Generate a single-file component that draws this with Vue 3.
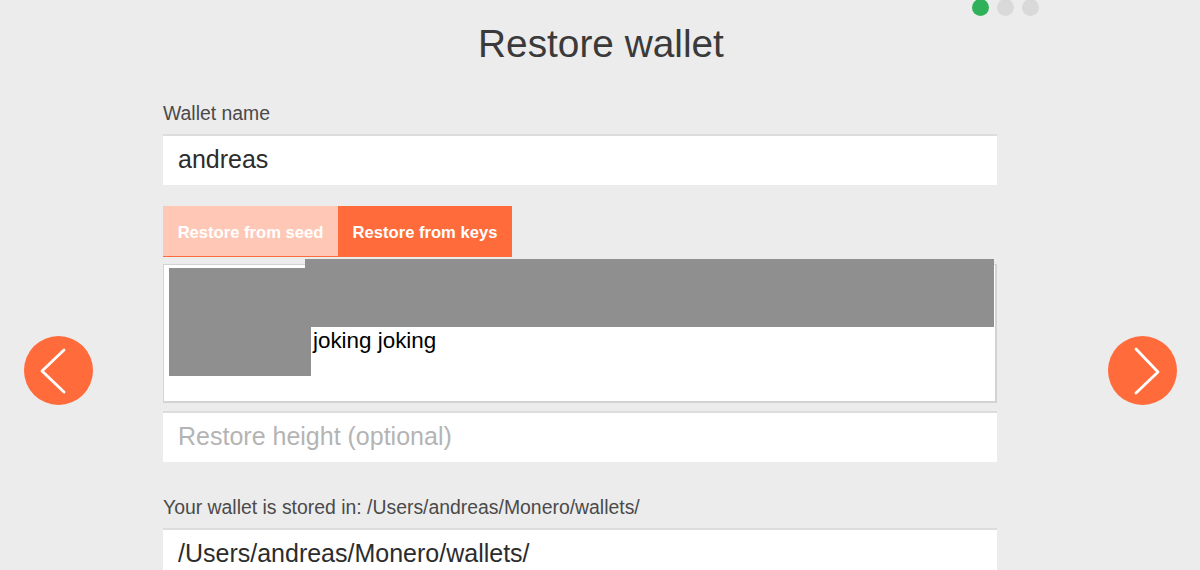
<script setup>
import { ref } from "vue";

const walletName = ref("andreas");
const restoreHeight = ref("");
const walletPath = ref("/Users/andreas/Monero/wallets/");
const activeTab = ref("keys");
const steps = [true, false, false];
</script>

<template>
  <div class="page">
    <div class="dots">
      <span v-for="(on, i) in steps" :key="i" class="dot" :class="{ on }"></span>
    </div>

    <div class="side">
      <button class="nav" aria-label="Back">
        <svg width="70" height="70" viewBox="0 0 70 70">
          <path d="M40 14 L18 35 L40 56" />
        </svg>
      </button>
    </div>

    <main class="main">
      <h1 class="title">Restore wallet</h1>

      <label class="label">Wallet name</label>
      <input v-model="walletName" class="field" type="text" />

      <div class="tabs">
        <button class="tab" :class="{ active: activeTab === 'seed' }" @click="activeTab = 'seed'">Restore from seed</button>
        <button class="tab" :class="{ active: activeTab === 'keys' }" @click="activeTab = 'keys'">Restore from keys</button>
      </div>

      <div class="seed">
        <span class="seed-text">joking joking</span>
        <div class="redact redact-left"></div>
        <div class="redact redact-top"></div>
      </div>

      <input v-model="restoreHeight" class="field height" type="text" placeholder="Restore height (optional)" />

      <label class="label stored">Your wallet is stored in: /Users/andreas/Monero/wallets/</label>
      <input v-model="walletPath" class="field" type="text" />
    </main>

    <div class="side right">
      <button class="nav" aria-label="Next">
        <svg width="70" height="70" viewBox="0 0 70 70">
          <path d="M28 13 L50 36 L28 57" />
        </svg>
      </button>
    </div>
  </div>
</template>

<style>
html, body {
  background: #ececec;
  overflow: hidden;
}
</style>

<style scoped>
.page {
  position: relative;
  display: grid;
  grid-template-columns: 163px 834px 1fr;
  width: 1200px;
  height: 570px;
  overflow: hidden;
  background: #ececec;
  font-family: "Liberation Sans", Arial, sans-serif;
}

.dots {
  position: absolute;
  top: -1px;
  left: 972px;
  display: flex;
  gap: 8px;
}

.dot {
  width: 17px;
  height: 17px;
  border-radius: 50%;
  background: #d9d9d9;
}

.dot.on {
  background: #2fb15a;
}

.side {
  padding: 336px 0 0 24px;
}

.side.right {
  padding-left: 111px;
}

.nav {
  display: block;
  width: 69px;
  height: 69px;
  padding: 0;
  border: 0;
  border-radius: 50%;
  background: #ff6b3b;
}

.nav svg {
  display: block;
}

.nav path {
  fill: none;
  stroke: #fff;
  stroke-width: 2.8;
  stroke-linecap: round;
  stroke-linejoin: round;
}

.main {
  display: flex;
  flex-direction: column;
  min-width: 0;
}

.title {
  margin: 21px 0 0;
  height: 45px;
  line-height: 45px;
  padding-left: 42px;
  text-align: center;
  font-size: 38.8px;
  font-weight: 400;
  color: #3a3a3a;
}

.label {
  margin-top: 36px;
  margin-bottom: 10px;
  height: 22px;
  line-height: 22px;
  font-size: 19.4px;
  color: #4a4a4a;
}

.label.stored {
  margin-top: 34px;
}

.field {
  box-sizing: border-box;
  width: 100%;
  height: 51px;
  margin: 0;
  padding: 0 15px 2px;
  border: 0;
  border-top: 2px solid #dcdcdc;
  border-radius: 0;
  outline: none;
  background: #fff;
  font-family: inherit;
  font-size: 25px;
  color: #2c2c2c;
}

.field::placeholder {
  color: #b4b4b4;
  opacity: 1;
}

.field.height {
  margin-top: 8px;
}

.tabs {
  display: flex;
  margin-top: 21px;
}

.tab {
  box-sizing: border-box;
  width: 175px;
  height: 51px;
  padding: 3px 0 0;
  border: 0;
  border-bottom: 1px solid #ff6b3b;
  background: #ffc8b6;
  font-family: inherit;
  font-size: 16.6px;
  font-weight: 700;
  color: #fff;
}

.tab.active {
  width: 174px;
  background: #ff6b3b;
}

.seed {
  position: relative;
  box-sizing: border-box;
  height: 139px;
  margin-top: 7px;
  padding: 63px 0 0 149px;
  border: 1px solid #d3d3d3;
  border-width: 1px 2px 2px 1px;
  background: #fff;
}

.seed-text {
  font-size: 22.4px;
  line-height: 26px;
  color: #000;
}

.redact {
  position: absolute;
  background: #8f8f8f;
}

.redact-left {
  top: 3px;
  left: 5px;
  width: 142px;
  height: 108px;
}

.redact-top {
  top: -6px;
  left: 141px;
  width: 689px;
  height: 68px;
}
</style>
